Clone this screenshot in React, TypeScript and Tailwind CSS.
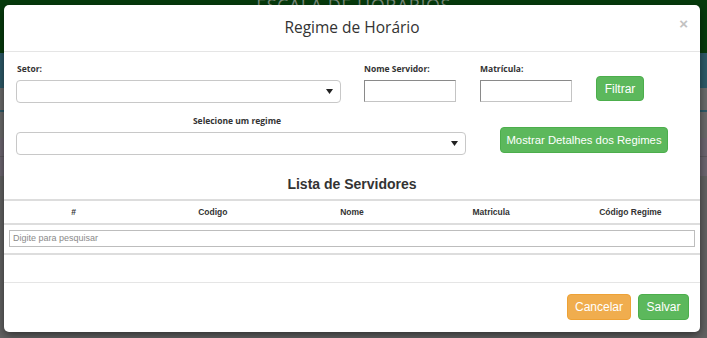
import React from 'react';

function Caret() {
  return (
    <svg width="7" height="5" viewBox="0 0 7 5" className="fill-[#222]">
      <path d="M0 0 L7 0 L3.5 5 Z" />
    </svg>
  );
}

function SelectBox({ width }: { width: string }) {
  return (
    <div className={`${width} h-[23px] flex items-center justify-end pr-[7px] rounded-[4px] border border-[#c8c8c8] bg-white`}>
      <Caret />
    </div>
  );
}

function Label({ children, className = '' }: { children: React.ReactNode; className?: string }) {
  return (
    <div className={`h-[14px] mb-[4px] text-[8.5px] leading-[14px] font-bold text-[#333] ${className}`} style={{ fontFamily: '"Open Sans", sans-serif' }}>
      {children}
    </div>
  );
}

function TextInput() {
  return <div className="w-[92px] h-[22px] border border-[#c4c4c4] border-t-[#8a8a8a] border-l-[#8a8a8a] bg-white" />;
}

export default function App() {
  const cols = ['#', 'Codigo', 'Nome', 'Matricula', 'Código Regime'];
  return (
    <div className="relative w-[707px] h-[338px] overflow-hidden bg-[#626262]" style={{ fontFamily: '"Liberation Sans", Arial, sans-serif' }}>
      {/* page behind the dialog (already dimmed) */}
      <div className="h-[53px] bg-[#063b0c] flex justify-center">
        <span className="text-[18px] leading-[16px] tracking-[0.5px] text-[#7b8a7c] -mt-[3px]" style={{ fontFamily: '"Open Sans", sans-serif' }}>
          ESCALA DE HORARIOS
        </span>
      </div>
      <div className="h-[35px] bg-[#2d5a68]" />
      <div className="h-[24px] bg-[#6b6b6b] border-b-2 border-[#2d5a68]" />
      <div className="h-[26px] bg-[#6a6a6a]" />
      <div className="h-[19px] bg-[#6d6670] border-b border-[#5e5a60]" />
      <div className="h-[19px] bg-[#6d6670]" />
      <div className="h-[162px] bg-[#626262]" />

      {/* dialog */}
      <div className="absolute left-[4px] top-[5px] w-[696px] h-[327px] bg-white rounded-[5px] shadow-[0_3px_9px_rgba(0,0,0,0.5)] flex flex-col">
        <div className="relative h-[47px] border-b border-[#e5e5e5] flex items-center justify-center">
          <span className="text-[15.5px] text-[#333]" style={{ fontFamily: '"Open Sans", sans-serif' }}>
            Regime de Horário
          </span>
          <span className="absolute right-[12px] top-[8px] text-[15px] font-bold text-[#c2c2c2]">×</span>
        </div>

        <div className="h-[230px] flex flex-col">
          <div className="flex items-start pl-[12px] pt-[10px]">
            <div className="w-[325px]">
              <Label className="pl-[1px]">Setor:</Label>
              <SelectBox width="w-[325px]" />
            </div>
            <div className="ml-[23px]">
              <Label>Nome Servidor:</Label>
              <TextInput />
            </div>
            <div className="ml-[24px]">
              <Label>Matrícula:</Label>
              <TextInput />
            </div>
            <button className="ml-[24px] mt-[14px] w-[48px] h-[25px] rounded-[4px] bg-[#5cb85c] border border-[#4cae4c] text-white text-[12px]">
              Filtrar
            </button>
          </div>

          <div className="flex items-start pl-[12px] mt-[11px]">
            <div className="w-[450px]">
              <Label className="text-center pr-[8px]">Selecione um regime</Label>
              <SelectBox width="w-[450px]" />
            </div>
            <button className="ml-[34px] mt-[13px] w-[168px] h-[26px] rounded-[4px] bg-[#5cb85c] border border-[#4cae4c] text-white text-[11.3px]">
              Mostrar Detalhes dos Regimes
            </button>
          </div>

          <div className="mt-[17px] h-[24px] text-center text-[14px] leading-[24px] font-bold text-[#333]">
            Lista de Servidores
          </div>

          <div className="mt-[3px] border-t-2 border-[#dddddd]">
            <div className="grid grid-cols-5 h-[24px] border-b-2 border-[#dddddd]">
              {cols.map((c) => (
                <div key={c} className="flex items-center justify-center text-[8.5px] font-bold text-[#333]">
                  {c}
                </div>
              ))}
            </div>
            <div className="h-[30px] border-b-2 border-[#dddddd] px-[5px] pt-[5px]">
              <div className="h-[17px] border border-[#bdbdbd] flex items-center pl-[3px] text-[9px] text-[#8a8a8a]">
                Digite para pesquisar
              </div>
            </div>
          </div>
        </div>

        <div className="flex-1 border-t border-[#e5e5e5] flex items-start justify-end gap-[7px] pr-[11px] pt-[11px]">
          <button className="w-[64px] h-[26px] rounded-[4px] bg-[#f0ad4e] border border-[#eea236] text-white text-[12px]">
            Cancelar
          </button>
          <button className="w-[51px] h-[26px] rounded-[4px] bg-[#5cb85c] border border-[#4cae4c] text-white text-[12px]">
            Salvar
          </button>
        </div>
      </div>
    </div>
  );
}
